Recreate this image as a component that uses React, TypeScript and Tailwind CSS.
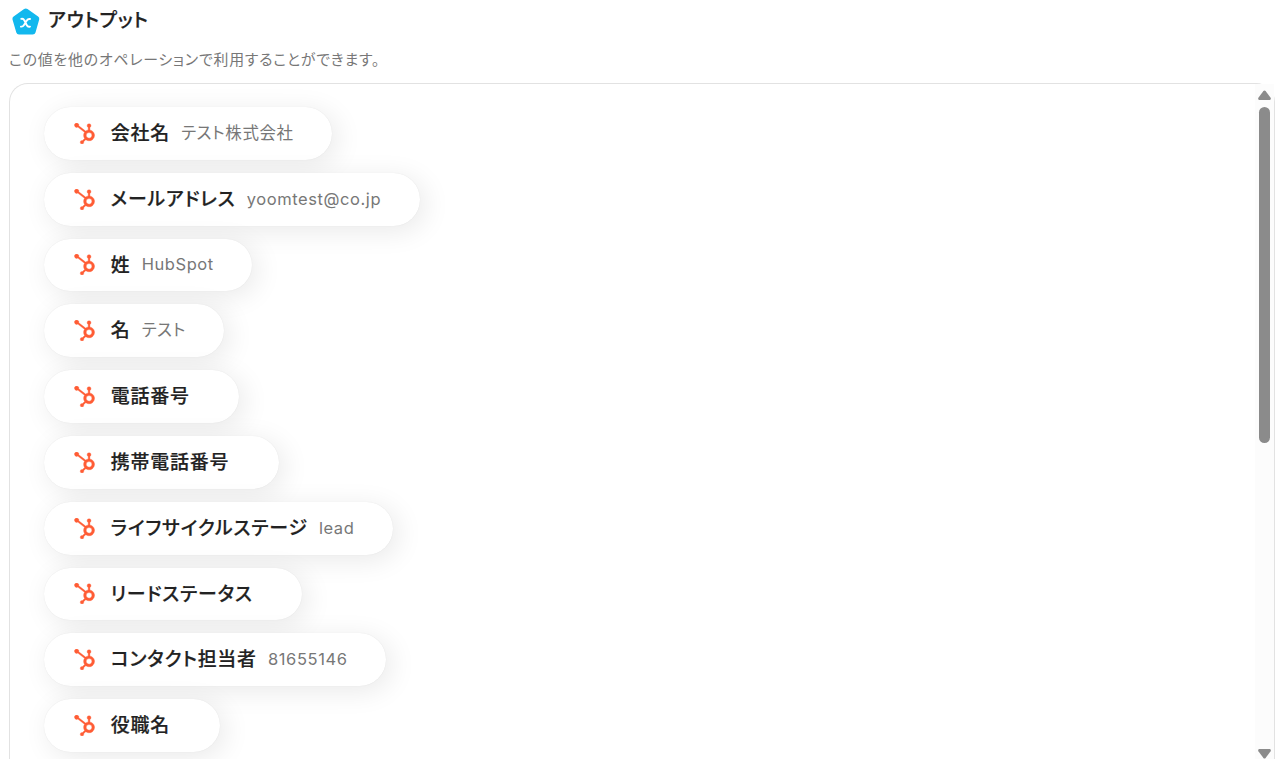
import { SiHubspot } from 'react-icons/si';

type OutputItem = {
  label: string;
  value?: string;
};

const OUTPUTS: OutputItem[] = [
  { label: '会社名', value: 'テスト株式会社' },
  { label: 'メールアドレス', value: 'yoomtest@co.jp' },
  { label: '姓', value: 'HubSpot' },
  { label: '名', value: 'テスト' },
  { label: '電話番号' },
  { label: '携帯電話番号' },
  { label: 'ライフサイクルステージ', value: 'lead' },
  { label: 'リードステータス' },
  { label: 'コンタクト担当者', value: '81655146' },
  { label: '役職名' },
];

function OutputIcon() {
  return (
    <svg viewBox="0 0 28 27" className="h-[27px] w-7 shrink-0">
      <path
        d="M12.1 1.1Q13.8 0 15.5 1.1L26.1 8.5Q27.7 9.7 27.2 11.6L23.5 24.4Q22.9 26.5 20.7 26.5H7Q4.9 26.5 4.3 24.4L0.5 11.6Q0 9.7 1.6 8.5Z"
        fill="#12b8ee"
      />
      <path
        d="M9.2 10.9Q11.4 10.4 12.3 12.3L14.8 17.2Q15.8 19.2 18 18.6M18 11Q16 10.6 14.8 12.6L12 17Q10.8 19 8.9 18.6"
        fill="none"
        stroke="#fff"
        strokeWidth="1.9"
        strokeLinecap="round"
      />
    </svg>
  );
}

function OutputChip({ label, value }: OutputItem) {
  return (
    <li className="flex h-[52.8px] w-fit shrink-0 items-center rounded-full bg-white pr-[38.5px] pl-[30.4px] whitespace-nowrap shadow-[0_0_1px_rgba(0,0,0,0.1),5px_5px_28px_rgba(0,0,0,0.09)]">
      <SiHubspot className="size-[21px] shrink-0 stroke-[#ff5c35] stroke-[0.4] text-[#ff5c35]" />
      <span className="mt-[2px] ml-[15.3px] text-[18.95px] leading-none font-medium text-[#222] [-webkit-text-stroke:0.2px_#222]">
        {label}
      </span>
      <span className="mb-[0.5px] ml-[11.2px] text-[16.5px] leading-none tracking-[0.58px] text-[#777]">
        {value}
      </span>
    </li>
  );
}

function ScrollBar() {
  return (
    <div className="flex w-[19px] shrink-0 flex-col items-center bg-[#fcfcfc] pt-[6px] text-[#8b8b8b]">
      <svg viewBox="0 0 13 10" className="h-[10px] w-[13px]" fill="currentColor">
        <path d="M5.4 1Q6.5 0 7.6 1L12.6 7.8Q13.4 9.6 11.8 10H1.2Q-.4 9.6 .4 7.8Z" />
      </svg>
      <div className="mt-[7px] h-[336px] w-[11px] rounded-full bg-[#8b8b8b]" />
      <svg viewBox="0 0 13 10" className="mt-auto h-[10px] w-[13px]" fill="currentColor">
        <path d="M5.4 9Q6.5 10 7.6 9L12.6 2.2Q13.4 .4 11.8 0H1.2Q-.4 .4 .4 2.2Z" />
      </svg>
    </div>
  );
}

export default function App() {
  return (
    <main className="flex h-[759px] w-[1280px] flex-col overflow-hidden bg-white font-['Inter','Noto_Sans_CJK_JP',sans-serif] tracking-[0.05em] [font-feature-settings:'palt']">
      <header className="flex h-[36px] shrink-0 items-start pt-[8px] pl-[11.5px]">
        <OutputIcon />
        <h1 className="mt-[3px] ml-[8.7px] text-[18.85px] leading-[20px] font-medium text-[#222] [-webkit-text-stroke:0.25px_#222]">
          アウトプット
        </h1>
      </header>
      <p className="mt-[14px] h-[33px] shrink-0 pl-[9px] text-[14.9px] leading-[20px] text-[#777]">
        この値を他のオペレーションで利用することができます。
      </p>
      <section className="mr-[5px] ml-[9px] flex min-h-0 flex-1 rounded-tl-[19px] rounded-tr-[19px] border border-b-0 border-[#e2e2e2]">
        <ul className="flex min-w-0 flex-1 flex-col gap-[13px] overflow-hidden pt-[23px] pl-[34px]">
          {OUTPUTS.map((item) => (
            <OutputChip key={item.label} {...item} />
          ))}
        </ul>
        <ScrollBar />
      </section>
    </main>
  );
}
